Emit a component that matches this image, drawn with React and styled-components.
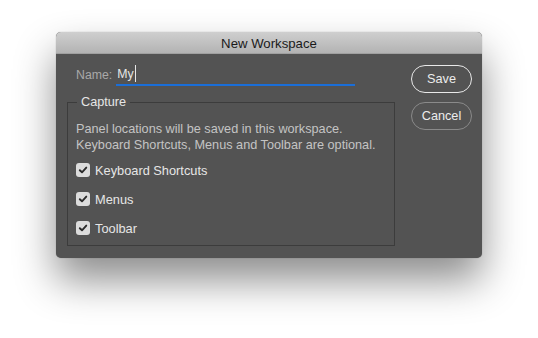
import styled, { createGlobalStyle } from "styled-components"

const Global = createGlobalStyle`
  html, body {
    margin: 0;
    background: #ffffff;
    font-family: "Liberation Sans", Arial, sans-serif;
  }
`

export default function App() {
  return (
    <>
      <Global />
      <Page>
        <Window>
          <TitleBar>New Workspace</TitleBar>
          <Body>
            <Main>
              <NameRow>
                <Label>Name:</Label>
                <Field>
                  My<Caret />
                </Field>
              </NameRow>
              <Group>
                <Legend>Capture</Legend>
                <Note>
                  Panel locations will be saved in this workspace.
                  <br />
                  Keyboard Shortcuts, Menus and Toolbar are optional.
                </Note>
                <Checks>
                  {["Keyboard Shortcuts", "Menus", "Toolbar"].map((name) => (
                    <Check key={name}>
                      <Box>
                        <svg width="10" height="10" viewBox="0 0 10 10">
                          <path d="M1.8 5.2 L4 7.3 L8.3 2.6" fill="none" stroke="#2b2b2b" strokeWidth="1.9" strokeLinecap="round" strokeLinejoin="round" />
                        </svg>
                      </Box>
                      {name}
                    </Check>
                  ))}
                </Checks>
              </Group>
            </Main>
            <Side>
              <Button $main>Save</Button>
              <Button>Cancel</Button>
            </Side>
          </Body>
        </Window>
      </Page>
    </>
  )
}

const Page = styled.div`
  width: 538px;
  height: 338px;
  padding: 32px 0 0 56px;
  box-sizing: border-box;
`
const Window = styled.div`
  width: 426px;
  height: 226px;
  border-radius: 5px;
  overflow: hidden;
  background: #535353;
  box-shadow: 0 22px 40px rgba(0, 0, 0, 0.45), 0 0 1px rgba(0, 0, 0, 0.4);
`
const TitleBar = styled.div`
  height: 22px;
  line-height: 23px;
  text-align: center;
  font-size: 13.2px;
  color: #1a1a1a;
  background: linear-gradient(#cfcfcf, #b3b3b3);
  border-bottom: 1px solid #a0a0a0;
  box-sizing: border-box;
`
const Body = styled.div`
  display: flex;
  padding: 11px 10px 0 11px;
`
const Main = styled.div`
  width: 328px;
  display: flex;
  flex-direction: column;
`
const NameRow = styled.div`
  display: flex;
  align-items: flex-end;
  height: 21px;
  padding-left: 9px;
  font-size: 12.3px;
`
const Label = styled.span`
  color: #a9a9a9;
  padding-bottom: 4px;
`
const Field = styled.div`
  display: flex;
  align-items: center;
  width: 238px;
  margin-left: 4px;
  padding: 0 0 2px 1px;
  color: #e6e6e6;
  border-bottom: 2px solid #1a6ed8;
`
const Caret = styled.span`
  display: inline-block;
  width: 1px;
  height: 17px;
  margin-left: 1px;
  background: #e6e6e6;
`
const Group = styled.div`
  position: relative;
  margin-top: 16px;
  height: 144px;
  border: 1px solid #3c3c3c;
  padding: 18px 0 0 8px;
  box-sizing: border-box;
`
const Legend = styled.span`
  position: absolute;
  top: -8px;
  left: 9px;
  padding: 0 4px;
  background: #535353;
  color: #e6e6e6;
  font-size: 12.7px;
`
const Note = styled.p`
  margin: 0;
  font-size: 12.7px;
  line-height: 16px;
  color: #c4c4c4;
`
const Checks = styled.div`
  display: flex;
  flex-direction: column;
  gap: 15px;
  margin-top: 10px;
`
const Check = styled.label`
  display: flex;
  align-items: center;
  gap: 5px;
  height: 14px;
  font-size: 12.8px;
  color: #e6e6e6;
`
const Box = styled.span`
  display: flex;
  align-items: center;
  justify-content: center;
  width: 14px;
  height: 14px;
  border-radius: 3px;
  background: #dcdcdc;
`
const Side = styled.div`
  display: flex;
  flex-direction: column;
  gap: 9px;
  margin-left: 16px;
`
const Button = styled.div`
  width: 61px;
  height: 28px;
  box-sizing: border-box;
  border-radius: 14px;
  border: 1px solid ${(p) => (p.$main ? "#e8e8e8" : "#8a8a8a")};
  color: #ececec;
  font-size: 12.7px;
  display: flex;
  align-items: center;
  justify-content: center;
`
